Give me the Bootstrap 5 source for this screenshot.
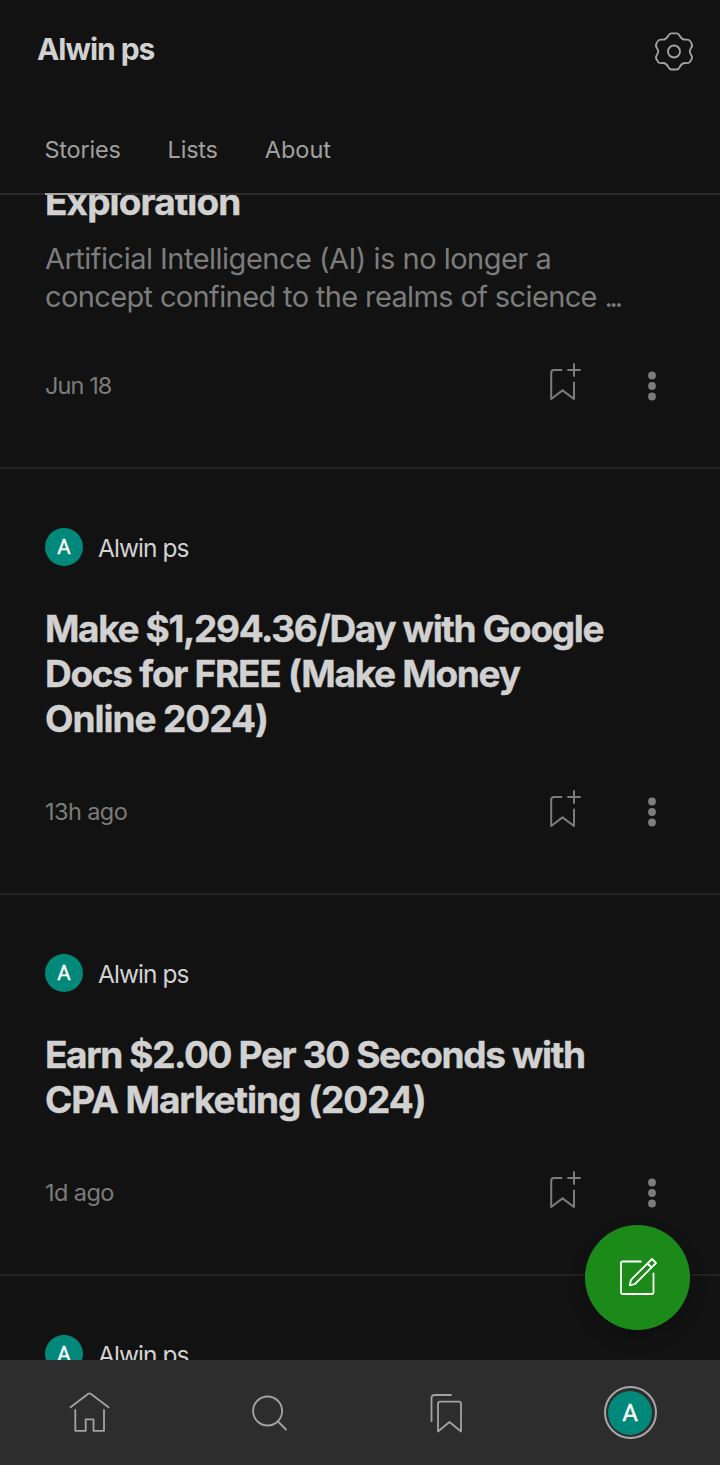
<!DOCTYPE html>
<html lang="en" data-bs-theme="dark">
<head>
<meta charset="utf-8">
<meta name="viewport" content="width=device-width, initial-scale=1">
<title>Alwin ps</title>
<link href="https://cdn.jsdelivr.net/npm/bootstrap@5.3.0/dist/css/bootstrap.min.css" rel="stylesheet">
<style>
body{font-family:Inter,"Liberation Sans",sans-serif;background:#121212;color:#d1d1d1;height:1465px;overflow:hidden}
.ls{display:inline-block;white-space:nowrap}
.t-name{letter-spacing:-1.05px}
.t-tab{letter-spacing:-.22px}
.t-wide{letter-spacing:-1.36px}
.t-mid{letter-spacing:-1.28px}
.t-short{letter-spacing:-1.05px}
.t-open{letter-spacing:-.9px}
.t-lead{letter-spacing:-.51px}
.t-lead2{letter-spacing:-.63px}
.t-dots{letter-spacing:-3.2px}
.t-jun{letter-spacing:-.9px}
.t-ago{letter-spacing:-.58px}
.topbar{height:195px;border-bottom:2px solid #2b2b2b;background:#121212;z-index:2}
.name-row{height:102px;padding:0 24px 0 37px}
.page-name{font-size:30px;font-weight:700;line-height:36px;margin-top:-4px;color:#d1d1d1}
.tabs{padding-left:44.5px;gap:47px;height:93px;margin-bottom:-2px}
.tabs .nav-link{padding:33px 0 0;color:#a0a0a0;font-size:23.5px;line-height:30px;height:93px;border-bottom:2px solid transparent}
.tabs .nav-link.active{border-color:#a5a5a5}
.feed{min-height:0}
.story{padding:59px 45px 0;border-bottom:2px solid #212121}
.story:first-child{padding-top:0;margin-top:-16px}
.story-title{font-size:37px;font-weight:700;line-height:45px;margin:0;color:#d1d1d1;-webkit-text-stroke:.4px #d1d1d1}
.excerpt{font-size:29px;line-height:38px;color:#7c7c7c;margin:16px 0 0}
.author{height:38px;gap:15px;font-size:24.5px;margin-bottom:40px;line-height:41px}
.author .ls{letter-spacing:-.95px}
.avatar{width:38px;height:38px;background:#00897b;color:#fff;font:400 20.5px/39px Roboto,sans-serif;-webkit-text-stroke:.4px #fff}
.meta{height:152px;color:#7c7c7c;font-size:23.5px;padding-bottom:10px}
.story:first-child .meta{height:151px;padding-bottom:12px}
.icons{gap:60px;margin-right:12px}
.save-icon{margin-bottom:7px}
svg{display:block;fill:none;stroke-linecap:round;stroke-linejoin:round}
.fab{width:105px;height:105px;right:30px;bottom:135px;background:#1c8a19;box-shadow:0 8px 18px rgba(0,0,0,.2);z-index:3}
.bottom{height:105px;background:#2d2d2d;z-index:2}
.me{width:53px;height:53px;border:2.5px solid #a8a8a8}
.me .avatar{width:44px;height:44px;font-size:24px;line-height:45px}
</style>
</head>
<body class="d-flex flex-column position-relative">
<svg width="0" height="0" class="position-absolute">
<symbol id="save" viewBox="0 0 32 40"><path d="M12.500 8H5Q2.200 8 2.200 11V37L13.500 28.400L25 37V20.500M25 2V14M19 8H31" stroke="#7c7c7c" stroke-width="2" fill="none"/></symbol>
<symbol id="more" viewBox="0 0 10 32"><g fill="#7c7c7c" stroke="none"><circle cx="5" cy="5.500" r="3.900"/><circle cx="5" cy="16" r="3.900"/><circle cx="5" cy="26.500" r="3.900"/></g></symbol>
</svg>
<header class="topbar flex-shrink-0 position-relative">
<div class="name-row d-flex align-items-center justify-content-between">
<h1 class="page-name mb-0"><span class="ls t-name">Alwin ps</span></h1>
<svg width="44" height="44" viewBox="0 0 44 44" stroke="#a3a3a3" stroke-width="1.8"><circle cx="22" cy="22.500" r="6"/><path transform="translate(0 .5)" d="M19.300 3.800H24.700C28.500 3.800 27.300 10.200 33 10.200C36.500 10.200 37 9.400 39.300 13.400C42 18 37.800 18 37.800 22S42 26 39.300 30.300C37 34.300 36.500 33.500 33 33.500C27.300 33.500 28.500 40 24.700 40H19.300C15.500 40 16.700 33.500 11 33.500C7.500 33.500 7 34.300 4.700 30.300C2 26 6.200 26 6.200 22S2 18 4.700 13.400C7 9.400 7.500 10.200 11 10.200C16.700 10.200 15.500 3.800 19.300 3.800Z"/></svg>
</div>
<nav class="nav tabs">
<a class="nav-link active"><span class="ls t-tab">Stories</span></a>
<a class="nav-link"><span class="ls t-tab">Lists</span></a>
<a class="nav-link"><span class="ls">About</span></a>
</nav>
</header>
<main class="feed flex-grow-1 overflow-hidden">
<article class="story">
<h2 class="story-title"><span class="ls t-open">Exploration</span></h2>
<p class="excerpt"><span class="ls t-lead">Artificial Intelligence (AI) is no longer a</span><br><span class="ls t-lead2">concept confined to the realms of science <span class="t-dots">...</span></span></p>
<div class="meta d-flex align-items-center justify-content-between"><span class="ls t-jun">Jun 18</span><div class="icons d-flex align-items-center"><svg class="save-icon" width="32" height="40"><use href="#save"/></svg><svg width="22" height="32"><use href="#more"/></svg></div></div>
</article>
<article class="story">
<div class="author d-flex"><div class="avatar rounded-circle text-center">A</div><span class="ls">Alwin ps</span></div>
<h2 class="story-title"><span class="ls t-wide">Make $1,294.36/Day with Google</span><br><span class="ls t-mid">Docs for FREE (Make Money</span><br><span class="ls t-short">Online 2024)</span></h2>
<div class="meta d-flex align-items-center justify-content-between"><span class="ls t-ago">13h ago</span><div class="icons d-flex align-items-center"><svg class="save-icon" width="32" height="40"><use href="#save"/></svg><svg width="22" height="32"><use href="#more"/></svg></div></div>
</article>
<article class="story">
<div class="author d-flex"><div class="avatar rounded-circle text-center">A</div><span class="ls">Alwin ps</span></div>
<h2 class="story-title"><span class="ls t-wide">Earn $2.00 Per 30 Seconds with</span><br><span class="ls t-short">CPA Marketing (2024)</span></h2>
<div class="meta d-flex align-items-center justify-content-between"><span class="ls t-ago">1d ago</span><div class="icons d-flex align-items-center"><svg class="save-icon" width="32" height="40"><use href="#save"/></svg><svg width="22" height="32"><use href="#more"/></svg></div></div>
</article>
<article class="story">
<div class="author d-flex"><div class="avatar rounded-circle text-center">A</div><span class="ls">Alwin ps</span></div>
</article>
</main>
<button class="fab btn rounded-circle position-absolute p-0 border-0 d-flex align-items-center justify-content-center" aria-label="Write">
<svg width="45" height="45" viewBox="0 0 45 45" stroke="#fff" stroke-width="1.800"><path d="M26 6.500H7.500Q6 6.500 6 8V37.500Q6 39 7.500 39H37Q38.500 39 38.500 37.500V18.500M14.800 30.300L16 24.800L37 4L41 8L20 29ZM32.500 8.500L36.500 12.500"/></svg>
</button>
<nav class="bottom row g-0 flex-shrink-0 align-items-center position-relative">
<div class="col d-flex justify-content-center"><svg width="44" height="44" viewBox="0 0 44 44" stroke="#a3a3a3" stroke-width="1.800"><path d="M2.500 16.300L20.300 2.700Q21.500 1.900 22.700 2.700L40.500 16.300M7.300 19V39.800H17.700V28.300H25.500V39.800H36V19"/></svg></div>
<div class="col d-flex justify-content-center"><svg width="44" height="44" viewBox="0 0 44 44" stroke="#a3a3a3" stroke-width="1.800"><circle cx="19.600" cy="20" r="14.500"/><path d="M30 30.500L38 38.500"/></svg></div>
<div class="col d-flex justify-content-center"><svg width="44" height="44" viewBox="0 0 44 44" stroke="#a3a3a3" stroke-width="1.800"><path d="M3.500 30V7.500Q3.500 4 7 4H23M10 40.500V13Q10 10.700 12.300 10.700H30.700Q33 10.700 33 13V40.500L21.500 31Z"/></svg></div>
<div class="col d-flex justify-content-center"><div class="me rounded-circle d-flex align-items-center justify-content-center"><div class="avatar rounded-circle text-center">A</div></div></div>
</nav>
<script src="https://cdn.jsdelivr.net/npm/bootstrap@5.3.0/dist/js/bootstrap.bundle.min.js"></script>
</body>
</html>
